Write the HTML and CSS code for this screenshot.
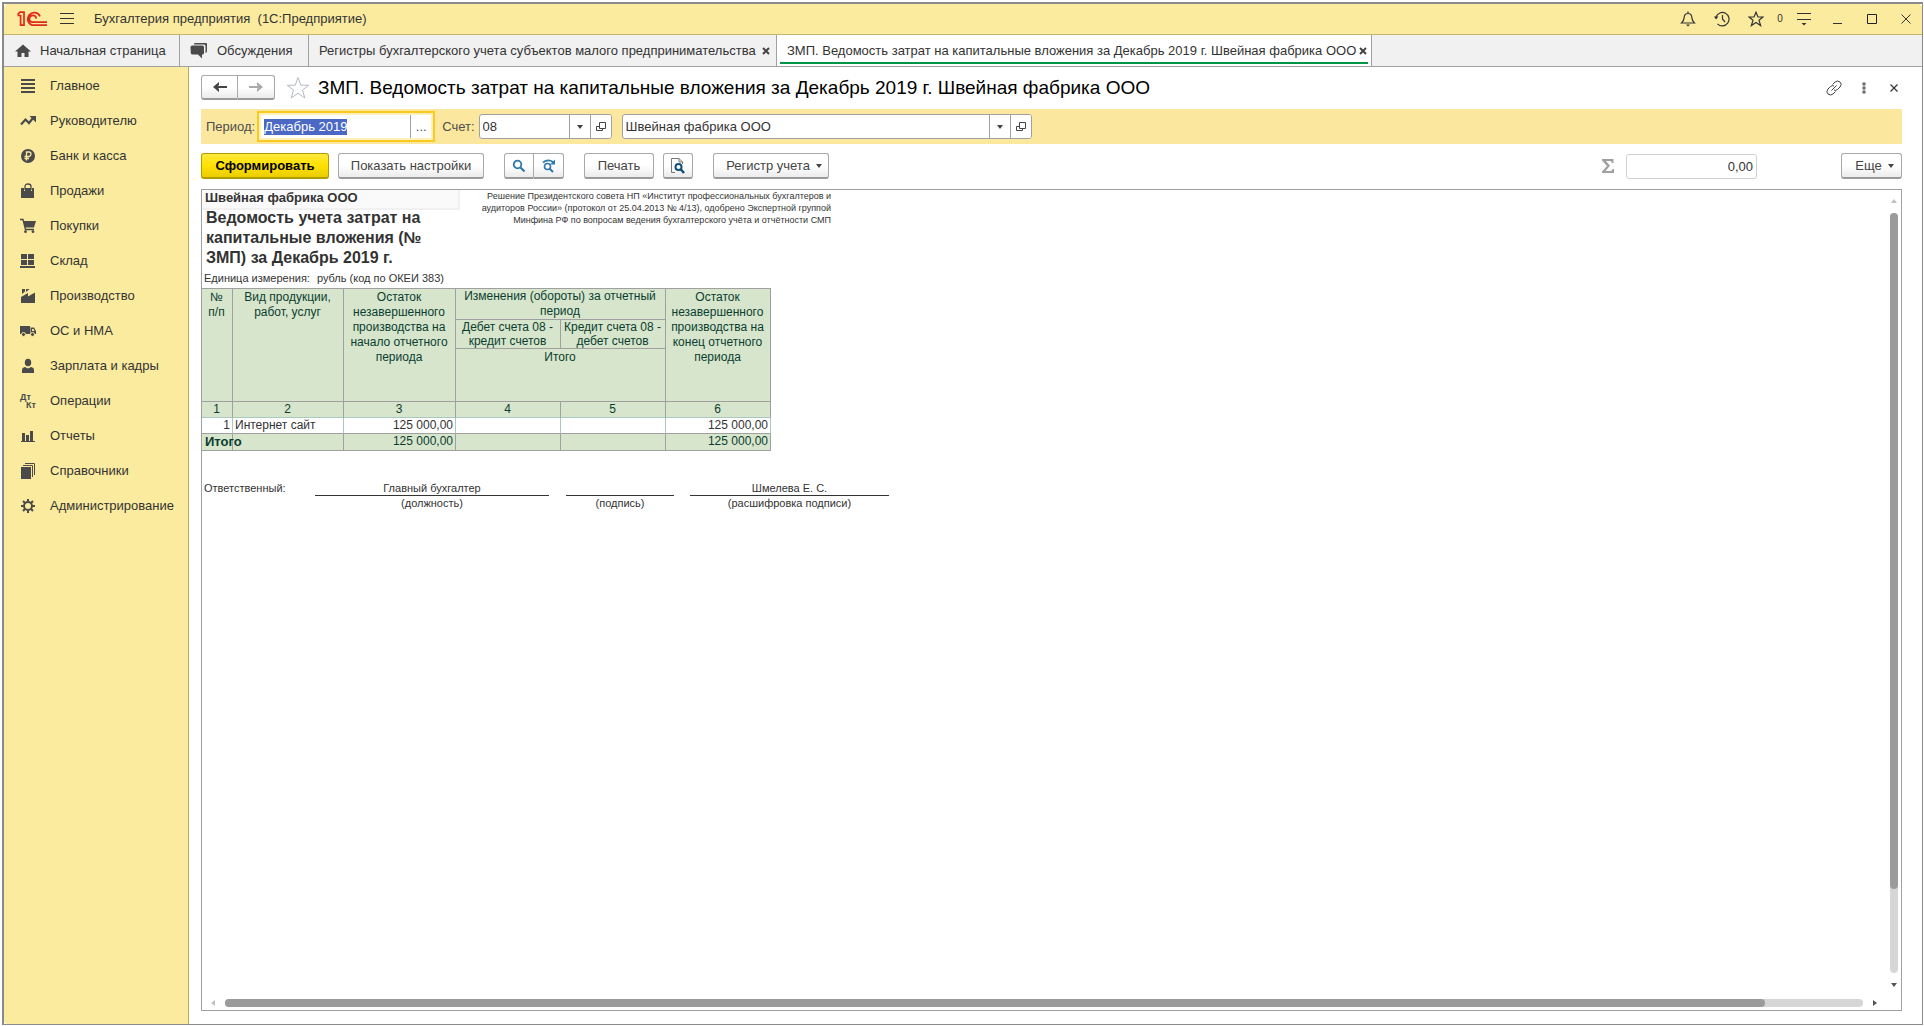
FILE: index.html
```html
<!DOCTYPE html>
<html lang="ru">
<head>
<meta charset="utf-8">
<title>Бухгалтерия предприятия (1С:Предприятие)</title>
<link rel="stylesheet" href="styles.css">
</head>
<body>
<div class="window">
  <header class="titlebar">
    <svg class="logo" width="30" height="16" viewBox="0 0 30 16" aria-label="1С"><path d="M.5 4.5H3.6V14.2H7V1.2H3L.5 3.6M23 5.4A6.4 6.4 0 1 0 15.5 14.2H30M19.2 7.6A3.4 3.4 0 1 0 15.5 11.2H30" fill="none" stroke="#dd2a1b" stroke-width="1.7"/></svg>
    <button class="bare" aria-label="Меню"><svg width="14" height="12"><path d="M0 .5H14M0 5.500H14M0 10.500H14" stroke="#333"/></svg></button>
    <span class="app-name">Бухгалтерия предприятия  (1С:Предприятие)</span>
    <div class="title-tools">
      <button class="bare" aria-label="Уведомления"><svg width="16" height="16" viewBox="0 0 16 16"><path d="M1.500 12C4 10 4 8.500 4.200 6 4.500 3.500 6 2.500 8 2.500S11.500 3.500 11.800 6C12 8.500 12 10 14.500 12ZM8 .5V2.500" fill="none" stroke="#333" stroke-width="1.2"/><path d="M6 13.500H10L8 15.500Z" fill="#333"/></svg></button>
      <button class="bare" aria-label="История"><svg width="16" height="16" viewBox="0 0 16 16"><path d="M2 6A6.700 6.700 0 1 1 3.500 12.800M8.500 4V8L11 11" fill="none" stroke="#333" stroke-width="1.200"/><path d="M0 5.500H4.500L2 8.500Z" fill="#333"/></svg></button>
      <button class="bare" aria-label="Избранное"><svg width="16" height="16" viewBox="0 0 16 16"><path d="M8 1.200L10 6H15L11 9.200 12.600 14.500 8 11.400 3.400 14.500 5 9.200 1 6H6Z" fill="none" stroke="#333" stroke-width="1.200"/></svg></button>
      <span class="count">0</span>
      <button class="bare" aria-label="Настройки"><svg width="16" height="16" viewBox="0 0 16 16"><path d="M1 2.500H15M1 8.500H15" stroke="#333" stroke-width="1.200"/><path d="M5.500 12H10.500L8 14.500Z" fill="#333"/></svg></button>
      <button class="bare" aria-label="Свернуть"><svg width="16" height="16" viewBox="0 0 16 16"><path d="M3 12.500H12" stroke="#333"/></svg></button>
      <button class="bare" aria-label="Развернуть"><svg width="16" height="16" viewBox="0 0 16 16"><path d="M3.500 3.500H12.500V12.500H3.500Z" fill="none" stroke="#222"/></svg></button>
      <button class="bare" aria-label="Закрыть"><svg width="16" height="16" viewBox="0 0 16 16"><path d="M3.500 3.500L12.500 12.500M12.500 3.500L3.500 12.500" stroke="#333"/></svg></button>
    </div>
  </header>

  <nav class="tabs">
    <a class="tab tab-home" href="#"><svg width="16" height="14" viewBox="0 0 16 14"><path d="M8 .5L16 7.500H13.500V13H9.500V9H6.500V13H2.500V7.500H0Z" fill="#4a4a4a"/></svg>Начальная страница</a>
    <a class="tab tab-chat" href="#"><svg width="18" height="16" viewBox="0 0 18 16"><path d="M4 2V1Q4 0 5 0H16Q17 0 17 1V8Q17 9 16 10H15.500V3Q15.500 1.500 14 1.500H4Z" fill="#4a4a4a"/><path d="M2 2.500H12.500Q14 2.500 14 4V10Q14 11.500 12.500 11.500H12V15.500L8 11.500H2.500Q1 11.500.8 10L.5 4.500Q.5 2.500 2 2.500Z" fill="#4a4a4a"/></svg>Обсуждения</a>
    <div class="tab tab-list"><a href="#">Регистры бухгалтерского учета субъектов малого предпринимательства</a><button class="bare" aria-label="Закрыть"><svg width="8" height="8"><path d="M1 1L7 7M7 1L1 7" stroke="#444" stroke-width="2"/></svg></button></div>
    <div class="tab tab-active"><a href="#">ЗМП. Ведомость затрат на капитальные вложения за Декабрь 2019 г. Швейная фабрика ООО</a><button class="bare" aria-label="Закрыть"><svg width="8" height="8"><path d="M1 1L7 7M7 1L1 7" stroke="#444" stroke-width="2"/></svg></button></div>
  </nav>

  <div class="body">
    <nav class="sidebar">
      <a href="#"><svg width="16" height="16" viewBox="0 0 16 16"><path d="M1 2H15M1 6H15M1 10H15M1 14H15" stroke="#4a4a4a" stroke-width="2"/></svg>Главное</a>
      <a href="#"><svg width="16" height="16" viewBox="0 0 16 16"><path d="M1 11.500L5.500 6.500 9 10 13 5" fill="none" stroke="#4a4a4a" stroke-width="2.200"/><path d="M9.500 3H16V9.500Z" fill="#4a4a4a"/></svg>Руководителю</a>
      <a href="#"><svg width="16" height="16" viewBox="0 0 16 16"><circle cx="8" cy="8" r="7" fill="#4a4a4a"/><path d="M6.500 12.500V4H9Q11 4 11 6T9 8.500H4.500M4.500 10.500H9" fill="none" stroke="#fbeb9f" stroke-width="1.300"/></svg>Банк и касса</a>
      <a href="#"><svg width="16" height="16" viewBox="0 0 16 16"><path d="M1 5H4V8H5V5H11V8H12V5H14V15H1Z" fill="#4a4a4a"/><path d="M5 7V3.500Q5 1 8 1T11 3.500V7" fill="none" stroke="#4a4a4a" stroke-width="1.300"/></svg>Продажи</a>
      <a href="#"><svg width="16" height="16" viewBox="0 0 16 16"><path d="M3.500 3H16L14 9.500H5Z" fill="#4a4a4a"/><path d="M0 1.500H3L5.500 11.500H14" fill="none" stroke="#4a4a4a" stroke-width="1.400"/><circle cx="5.500" cy="13.700" r="1.400" fill="#4a4a4a"/><circle cx="13" cy="13.700" r="1.400" fill="#4a4a4a"/></svg>Покупки</a>
      <a href="#"><svg width="16" height="16" viewBox="0 0 16 16"><path d="M1 1H7V6H1ZM8 1H14V6H8ZM1 7H7V12H1ZM8 7H14V12H8ZM0 13H15V15H0Z" fill="#4a4a4a"/></svg>Склад</a>
      <a href="#"><svg width="16" height="16" viewBox="0 0 16 16"><path d="M1 15V9L8 5V8.500L15 4.500V15ZM2 1H5V3.500L2 6ZM6 1H9.500L6 4Z" fill="#4a4a4a"/></svg>Производство</a>
      <a href="#"><svg width="16" height="16" viewBox="0 0 16 16"><path d="M0 3H10V11H0ZM10.500 4.500H14L16 8V11H10.500Z" fill="#4a4a4a"/><path d="M12 6H13.500L14.500 8H12Z" fill="#fbeb9f"/><circle cx="3.500" cy="11.500" r="2" fill="#4a4a4a" stroke="#fbeb9f"/><circle cx="12.500" cy="11.500" r="2" fill="#4a4a4a" stroke="#fbeb9f"/></svg>ОС и НМА</a>
      <a href="#"><svg width="16" height="16" viewBox="0 0 16 16"><ellipse cx="8" cy="4.500" rx="3.200" ry="3.800" fill="#4a4a4a"/><path d="M2 15V12Q2 9.500 5 9L8 10.500 11 9Q14 9.500 14 12V15Z" fill="#4a4a4a"/></svg>Зарплата и кадры</a>
      <a href="#"><span class="dtkt"><i>Дт</i><i>Кт</i></span>Операции</a>
      <a href="#"><svg width="16" height="16" viewBox="0 0 16 16"><path d="M1 13H15V14H1ZM2 5H5V13H2ZM6 7H9V13H6ZM10 3H13V13H10Z" fill="#4a4a4a"/></svg>Отчеты</a>
      <a href="#"><svg width="16" height="16" viewBox="0 0 16 16"><path d="M1 4H11V16H1Z" fill="#4a4a4a"/><path d="M3 2.500H12.500V14M5 .5H14.500V12" fill="none" stroke="#4a4a4a"/></svg>Справочники</a>
      <a href="#"><svg width="16" height="16" viewBox="0 0 16 16"><circle cx="8" cy="8" r="4" fill="none" stroke="#4a4a4a" stroke-width="2"/><path d="M8 1V3.500M8 12.500V15M1 8H3.500M12.500 8H15M3 3L5 5M11 11L13 13M13 3L11 5M5 11L3 13" stroke="#4a4a4a" stroke-width="2"/></svg>Администрирование</a>
    </nav>

    <main class="form">
      <div class="form-head">
        <div class="group nav-group">
          <button class="btn" aria-label="Назад"><svg width="16" height="12" viewBox="0 0 16 12"><path d="M15 6H4" stroke="#444" stroke-width="2"/><path d="M1 6L7 1V4L5 6 7 8V11Z" fill="#444"/></svg></button>
          <button class="btn" aria-label="Вперед"><svg width="16" height="12" viewBox="0 0 16 12"><path d="M1 6H12" stroke="#aaa" stroke-width="2"/><path d="M15 6L9 1V4L11 6 9 8V11Z" fill="#aaa"/></svg></button>
        </div>
        <button class="bare fav" aria-label="В избранное"><svg width="24" height="24" viewBox="0 0 24 24"><path d="M12 1.500L14.800 9.200H22.800L16.500 14 18.800 22 12 17.200 5.200 22 7.500 14 1.200 9.200H9.200Z" fill="#fff" stroke="#b4bac2"/></svg></button>
        <h1>ЗМП. Ведомость затрат на капитальные вложения за Декабрь 2019 г. Швейная фабрика ООО</h1>
        <div class="head-tools">
          <button class="bare" aria-label="Ссылка"><svg width="16" height="16" viewBox="0 0 16 16"><path d="M6.500 4.500L9 2Q11.500 0 14 2T14 7L11.500 9.500Q9.500 11 8 10M9.500 11.500L7 14Q4.500 16 2 14T2 9L4.500 6.500Q6.500 5 8 6M5.500 10.500L10.500 5.500" fill="none" stroke="#444"/></svg></button>
          <button class="bare" aria-label="Еще"><svg width="16" height="16" viewBox="0 0 16 16"><path d="M6.500 2.500H9.500V5.500H6.500ZM6.500 6.500H9.500V9.500H6.500ZM6.500 10.500H9.500V13.500H6.500Z" fill="#666"/></svg></button>
          <button class="bare" aria-label="Закрыть"><svg width="16" height="16" viewBox="0 0 16 16"><path d="M4.500 4.500L11.500 11.500M11.500 4.500L4.500 11.500" stroke="#333" stroke-width="1.200"/></svg></button>
        </div>
      </div>

      <div class="filter">
        <label for="period">Период:</label>
        <div class="field field-focus"><input id="period" value="Декабрь 2019"><button aria-label="Выбрать период">...</button></div>
        <label for="account">Счет:</label>
        <div class="field field-account"><input id="account" value="08"><button aria-label="Список"><span class="caret"></span></button><button aria-label="Открыть"><svg width="10" height="10"><path d="M3.500.5H9.500V6.500H3.500ZM3.500 4.500H.5V8.500H6.500V6.500" fill="none" stroke="#444"/></svg></button></div>
        <div class="field field-org"><input aria-label="Организация" value="Швейная фабрика ООО"><button aria-label="Список"><span class="caret"></span></button><button aria-label="Открыть"><svg width="10" height="10"><path d="M3.500.5H9.500V6.500H3.500ZM3.500 4.500H.5V8.500H6.500V6.500" fill="none" stroke="#444"/></svg></button></div>
      </div>

      <div class="toolbar">
        <button class="btn btn-main">Сформировать</button>
        <button class="btn btn-settings">Показать настройки</button>
        <div class="group find-group">
          <button class="btn" aria-label="Найти"><svg width="14" height="14" viewBox="0 0 14 14"><circle cx="5.500" cy="5.500" r="3.800" fill="none" stroke="#2b78ae" stroke-width="1.800"/><path d="M8.500 8.500L12.500 12.500" stroke="#2b78ae" stroke-width="2.200"/></svg></button>
          <button class="btn" aria-label="Найти далее"><svg width="14" height="14" viewBox="0 0 14 14"><circle cx="5.500" cy="7.500" r="3" fill="none" stroke="#2b78ae" stroke-width="1.600"/><path d="M7.500 9.500L11 13" stroke="#2b78ae" stroke-width="2"/><path d="M1 3.500Q6-.5 11 3" fill="none" stroke="#2b78ae" stroke-width="1.700"/><path d="M13 .5V5.500H8Z" fill="#2b78ae"/></svg></button>
        </div>
        <button class="btn btn-print">Печать</button>
        <button class="btn btn-preview" aria-label="Предварительный просмотр"><svg width="14" height="16" viewBox="0 0 14 16"><path d="M4 14.500H.5V.5H8L11.500 4V6M8 .5V4H11.500" fill="none" stroke="#777"/><circle cx="7.500" cy="9" r="3" fill="#fff" stroke="#12507a" stroke-width="2"/><path d="M9.500 11L13 15" stroke="#12507a" stroke-width="2.500"/></svg></button>
        <button class="btn btn-register">Регистр учета<span class="caret"></span></button>
        <div class="sum">
          <svg width="12" height="14" viewBox="0 0 12 14"><path d="M0 0H11.500V4H10Q9.500 2 8 2H4L8 6.800 3.500 12H8.500Q10 12 10.500 10H12V14H0V12.500L5 7 0 1.500Z" fill="#a0a0a0"/></svg>
          <input aria-label="Сумма" value="0,00">
        </div>
        <button class="btn btn-more">Еще<span class="caret"></span></button>
      </div>

      <section class="report">
        <div class="sheet">
          <div class="sheet-top">
            <div class="sheet-title">
              <div class="org">Швейная фабрика ООО</div>
              <h2>Ведомость учета затрат на капитальные вложения (№ ЗМП) за Декабрь 2019 г.</h2>
            </div>
            <p class="approval">Решение Президентского совета НП «Институт профессиональных бухгалтеров и аудиторов России» (протокол от 25.04.2013 № 4/13), одобрено Экспертной группой Минфина РФ по вопросам ведения бухгалтерского учёта и отчётности СМП</p>
          </div>
          <div class="unit"><span>Единица измерения:</span><span>рубль (код по ОКЕИ 383)</span></div>
          <table>
            <colgroup><col class="c-num"><col class="c-name"><col class="c-rest"><col class="c-turn"><col class="c-turn"><col class="c-turn"></colgroup>
            <thead>
              <tr class="r-group"><th rowspan="3">№<br>п/п</th><th rowspan="3">Вид продукции, работ, услуг</th><th rowspan="3">Остаток незавершенного производства на начало отчетного периода</th><th colspan="2">Изменения (обороты) за отчетный период</th><th rowspan="3">Остаток незавершенного производства на конец отчетного периода</th></tr>
              <tr class="r-sub"><th>Дебет счета 08 - кредит счетов</th><th>Кредит счета 08 - дебет счетов</th></tr>
              <tr class="r-total"><th colspan="2">Итого</th></tr>
              <tr class="r-index"><th>1</th><th>2</th><th>3</th><th>4</th><th>5</th><th>6</th></tr>
            </thead>
            <tbody>
              <tr><td class="num">1</td><td>Интернет сайт</td><td class="num">125 000,00</td><td></td><td></td><td class="num">125 000,00</td></tr>
            </tbody>
            <tfoot>
              <tr><td class="total-label">Итого</td><td></td><td class="num">125 000,00</td><td></td><td></td><td class="num">125 000,00</td></tr>
            </tfoot>
          </table>
          <div class="signs">
            <span class="who">Ответственный:</span>
            <div class="sign sign-post"><b>Главный бухгалтер</b><span>(должность)</span></div>
            <div class="sign sign-hand"><b></b><span>(подпись)</span></div>
            <div class="sign sign-name"><b>Шмелева Е. С.</b><span>(расшифровка подписи)</span></div>
          </div>
        </div>
        <div class="vscroll"><span class="arrow up"></span><div class="track"><div class="thumb"></div></div><span class="arrow down"></span></div>
        <div class="hscroll"><span class="arrow left"></span><div class="track"><div class="thumb"></div></div><span class="arrow right"></span></div>
      </section>
    </main>
  </div>
</div>
<script>
document.getElementById('period').select();
</script>
</body>
</html>
```
FILE: styles.css
```css
* { box-sizing: border-box; }
body { margin: 0; padding: 2px 1px 1px 2px; height: 100vh; background: #fff; font: 13px/16px "Liberation Sans", Arial, sans-serif; color: #333; }
a { color: inherit; text-decoration: none; }
svg { display: block; flex: none; }
button, input { font: inherit; color: inherit; margin: 0; }
.bare { border: 0; padding: 0; background: none; }

.window { height: 100%; display: flex; flex-direction: column; border: 2px solid #8a8a8a; border-right-width: 1px; border-bottom-width: 1px; overflow: hidden; }

.titlebar { flex: none; height: 31px; display: flex; align-items: center; padding: 0 8px 0 13px; background: #fbeb9f; border-bottom: 1px solid #c4b66c; border-radius: 4px 4px 0 0; }
.logo { margin-right: 13px; }
.app-name { margin-left: 20px; white-space: pre; }
.title-tools { margin-left: auto; display: flex; align-items: center; gap: 18px; }
.count { width: 8px; margin: 0 -6px; font-size: 10px; text-align: center; }

.tabs { flex: none; height: 32px; display: flex; background: #f1f1f1; border-bottom: 1px solid #a0a0a0; }
.tab { flex: none; display: flex; align-items: center; gap: 9px; padding-left: 10px; border-right: 1px solid #a0a0a0; white-space: nowrap; }
.tab-home { width: 176px; padding-left: 11px; }
.tab-chat { width: 129px; }
.tab-list { width: 468px; gap: 6px; }
.tab-active { width: 595px; gap: 3px; background: linear-gradient(#009646, #009646) center bottom 2px / calc(100% - 6px) 2px no-repeat #fff; }

.body { flex: 1; min-height: 0; display: flex; }
.sidebar { flex: none; width: 185px; padding-top: 1px; background: #fbeb9f; border-right: 1px solid #b8ab5c; border-radius: 0 0 0 4px; }
.sidebar a { height: 35px; display: flex; align-items: center; gap: 14px; padding-left: 16px; }
.dtkt { width: 16px; display: flex; flex-direction: column; font: bold 9px/8px "Liberation Sans", Arial, sans-serif; color: #4a4a4a; }
.dtkt i { font-style: normal; }
.dtkt i + i { align-self: flex-end; }

.form { flex: 1; min-width: 0; display: flex; flex-direction: column; padding: 8px 20px 13px 12px; }
.form-head { flex: none; height: 25px; display: flex; align-items: center; }
.fav { margin: 0 8px 0 11px; }
h1 { margin: 0; font-size: 19px; line-height: 24px; font-weight: normal; color: #000; white-space: nowrap; }
.head-tools { margin-left: auto; display: flex; gap: 14px; }

.btn { height: 26px; padding: 0; display: flex; align-items: center; justify-content: center; gap: 6px; border: 1px solid #a9a9a9; border-bottom: 2px solid #9a9a9a; border-radius: 3px; background: linear-gradient(#fff 50%, #ebebeb); color: #444; }
.group { display: flex; }
.group .btn:first-child { border-radius: 3px 0 0 3px; }
.group .btn:last-child { border-radius: 0 3px 3px 0; border-left: 0; }
.nav-group .btn { width: 37px; height: 25px; }
.caret { border: 3px solid transparent; border-top: 4px solid #444; border-bottom: 0; }

.filter { flex: none; height: 35px; margin: 9px 0; display: flex; align-items: center; padding-left: 5px; background: #fbe89e; color: #4d4d4d; }
.field { height: 25px; display: flex; border: 1px solid #a0a0a0; border-radius: 3px; background: #fff; overflow: hidden; }
.field input { flex: 1; min-width: 0; border: 0; padding: 0 3px; outline: 0; background: none; color: #333; }
.field button { width: 21px; padding: 0; display: flex; align-items: center; justify-content: center; border: 0; border-left: 1px solid #a0a0a0; background: #fff; }
.field-focus { width: 178px; height: 31px; margin: 0 7px 0 2px; border: 2px solid #fbc920; border-radius: 0; padding: 2px; background: #fdf0bb; }
.field-focus input { background: #fff; }
.field-account { width: 133px; margin: 0 10px 0 4px; }
.field-org { width: 410px; }
::selection { background: #4a68c4; color: #fff; }

.toolbar { flex: none; display: flex; align-items: center; }
.btn-main { width: 128px; margin-right: 9px; font-weight: bold; color: #000; border-color: #b39c00; background: linear-gradient(#ffe93f, #ffe100 50%, #ebcd00); }
.btn-settings { width: 146px; }
.find-group { margin: 0 20px; }
.find-group .btn { width: 30px; }
.btn-print { width: 70px; margin-right: 9px; }
.btn-preview { width: 30px; margin-right: 20px; }
.btn-register { width: 116px; padding-left: 6px; }
.sum { margin-left: auto; display: flex; align-items: center; gap: 12px; }
.sum input { width: 131px; height: 25px; padding: 0 3px; text-align: right; border: 1px solid #d0d0d0; border-radius: 3px; }
.btn-more { width: 61px; margin-left: 84px; padding-left: 6px; }

.report { flex: 1; min-height: 0; margin-top: 10px; display: grid; grid-template: 1fr 14px / 1fr 14px; border: 1px solid #a0a0a0; color: #333; }
.sheet { min-width: 0; overflow: hidden; }
.sheet-top { display: flex; height: 80px; }
.sheet-title { width: 258px; }
.org { height: 20px; padding: 0 3px; font-weight: bold; background: #fafafa; border: solid #f1f1f1; border-width: 0 2px 2px 0; }
h2 { margin: -2px 0 0; padding-left: 4px; width: 240px; font-size: 16px; line-height: 20px; }
.approval { margin: 0; width: 371px; font-size: 9px; line-height: 12px; text-align: right; }
.unit { height: 18px; display: flex; gap: 7px; padding-left: 2px; font-size: 11px; line-height: 16px; }

table { width: 569px; table-layout: fixed; border-collapse: separate; border-spacing: 0; border-top: 1px solid #a0a0a0; font-size: 12px; line-height: 15px; }
.c-num { width: 31px; }
.c-name { width: 111px; }
.c-rest { width: 112px; }
.c-turn { width: 105px; }
th, td { padding: 0 2px; border: solid #a0a0a0; border-width: 0 1px 1px 0; vertical-align: top; }
th { padding: 0 1px 0 0; background: #d7e5cc; font-weight: normal; color: #0a3d30; }
.r-group { height: 31px; }
.r-group th[rowspan] { padding-top: 1px; }
.r-sub { height: 29px; line-height: 14px; }
.r-total { height: 53px; }
.r-total th { padding-top: 1px; }
.r-index { height: 16px; }
.r-index th { border-bottom-color: #a9c8c0; }
tbody tr { height: 16px; }
tbody td { border-right-color: #a9c8c0; }
tfoot tr { height: 17px; }
tfoot td { background: #d7e5cc; color: #0a3d30; }
.num { text-align: right; }
.total-label { padding-left: 3px; font-size: 13px; line-height: 16px; font-weight: bold; white-space: nowrap; }

.signs { margin-top: 30px; padding-left: 2px; display: flex; font-size: 11px; line-height: 15px; }
.who { width: 111px; }
.sign { text-align: center; }
.sign b { display: block; height: 15px; font-weight: normal; border-bottom: 1px solid #333; }
.sign span { display: block; }
.sign-post { width: 234px; }
.sign-hand { width: 108px; margin: 0 16px 0 17px; }
.sign-name { width: 199px; }

.vscroll { display: flex; flex-direction: column; align-items: center; padding: 9px 1px 9px 0; gap: 10px; }
.hscroll { display: flex; align-items: center; padding: 0 10px 0 9px; gap: 10px; }
.track { flex: 1; border-radius: 4px; background: #d6d6d6; }
.thumb { border-radius: 4px; background: #9b9b9b; }
.vscroll .track, .vscroll .thumb { width: 8px; }
.vscroll .thumb { height: 89%; }
.hscroll .track, .hscroll .thumb { height: 8px; }
.hscroll .thumb { width: 94%; }
.arrow { border: 3px solid transparent; }
.up { border-top: 0; border-bottom: 4px solid #c0c0c0; }
.down { border-bottom: 0; border-top: 4px solid #555; }
.left { border-left: 0; border-right: 4px solid #c0c0c0; }
.right { border-right: 0; border-left: 4px solid #555; }
```
